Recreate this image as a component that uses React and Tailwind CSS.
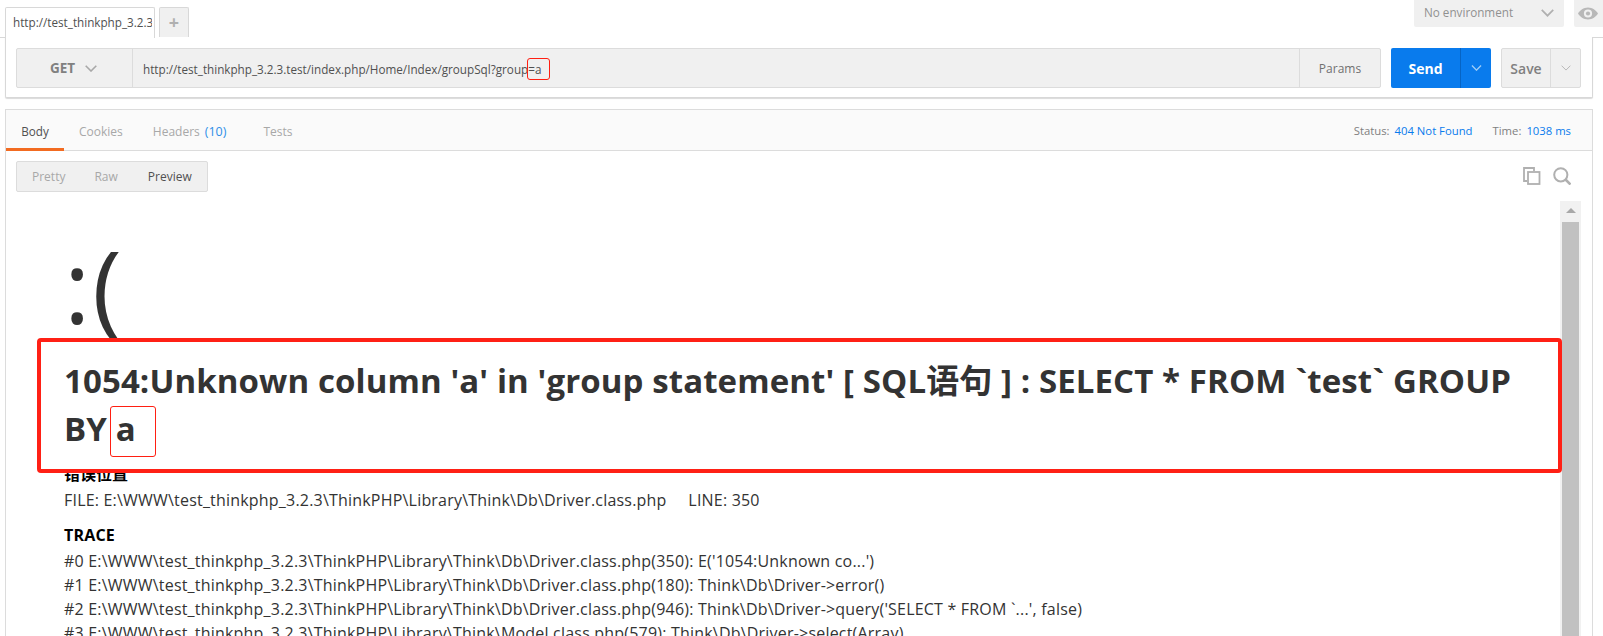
import React from "react";

const ui = "font-['Open_Sans','Noto_Sans',sans-serif]";
const doc = "font-['Open_Sans','Noto_Sans_CJK_SC',sans-serif]";

function Chevron({ className = "", color = "#a0a0a0", w = 12, h = 7, sw = 1.6 }) {
  return (
    <svg className={className} width={w} height={h} viewBox="0 0 12 7" fill="none">
      <path d="M0.7 0.7 L6 6 L11.3 0.7" stroke={color} strokeWidth={sw} />
    </svg>
  );
}

const traces = [
  "#0 E:\\WWW\\test_thinkphp_3.2.3\\ThinkPHP\\Library\\Think\\Db\\Driver.class.php(350): E('1054:Unknown co...')",
  "#1 E:\\WWW\\test_thinkphp_3.2.3\\ThinkPHP\\Library\\Think\\Db\\Driver.class.php(180): Think\\Db\\Driver->error()",
  "#2 E:\\WWW\\test_thinkphp_3.2.3\\ThinkPHP\\Library\\Think\\Db\\Driver.class.php(946): Think\\Db\\Driver->query('SELECT * FROM `...', false)",
  "#3 E:\\WWW\\test_thinkphp_3.2.3\\ThinkPHP\\Library\\Think\\Model.class.php(579): Think\\Db\\Driver->select(Array)",
];

export default function App() {
  return (
    <div className={`${ui} relative w-[1603px] h-[636px] overflow-hidden bg-white text-[#505050]`}>
      {/* tab strip */}
      <div className="flex h-[38px] items-start justify-between border-b border-[#d8d8d8]">
        <div className="flex items-start gap-[4px] pl-[5px] pt-[7px]">
          <div className="relative z-10 flex h-[31px] w-[150px] items-center rounded-t-[2px] border border-b-0 border-[#d8d8d8] bg-white pl-[7px] pr-[2px] text-[11.7px] text-[#505050]">
            <span className="overflow-hidden whitespace-nowrap">http://test_thinkphp_3.2.3.test</span>
          </div>
          <div className="flex h-[30px] w-[30px] items-center justify-center rounded-t-[2px] border border-b-0 border-[#d8d8d8] bg-[#f0f0f0] text-[18px] font-bold text-[#b0b0b0]">
            +
          </div>
        </div>
        <div className="flex items-start gap-[10px]">
          <div className="flex h-[27px] w-[150px] items-center justify-between rounded-b-[2px] bg-[#f0f0f0] pb-[1px] pl-[10px] pr-[10px] text-[11.7px] text-[#909090]">
            No environment
            <Chevron color="#b0b0b0" w={13} h={8} />
          </div>
          <div className="flex h-[27px] w-[29px] items-center justify-center rounded-bl-[2px] bg-[#f0f0f0] pr-[1px]">
            <svg width="20" height="13" viewBox="0 0 20 13">
              <path fillRule="evenodd" fill="#b8b8b8" d="M10 0.5C5.5 0.5 2 3.4 0 6.5c2 3.1 5.5 6 10 6s8-2.9 10-6c-2-3.1-5.5-6-10-6zM10 2.4a4.1 4.1 0 1 1 0 8.2a4.1 4.1 0 0 1 0-8.2z" />
              <circle cx="10" cy="6.5" r="2.1" fill="#b8b8b8" />
            </svg>
          </div>
        </div>
      </div>

      {/* request panel */}
      <div className="ml-[5px] flex h-[61px] w-[1588px] -mt-px items-center gap-[10px] rounded-b-[2px] border border-t-0 border-[#d8d8d8] bg-white pl-[10px] pr-[11px] pt-[1px] shadow-[0_1px_1px_rgba(0,0,0,0.15)]">
        <div className="flex h-[40px] w-[1365px] rounded-[2px] border border-[#dcdcdc] bg-[#f0f0f0]">
          <div className="flex w-[116px] items-center justify-center gap-[10px] border-r border-[#dcdcdc] pr-[2px] pt-[2px] text-[13.5px] font-bold text-[#808080]">
            GET
            <Chevron color="#a8a8a8" />
          </div>
          <div className="flex-1 pl-[10px] text-[11.7px] leading-[40px] text-[#505050]">
            http://test_thinkphp_3.2.3.test/index.php/Home/Index/groupSql?group=a
          </div>
          <div className="flex w-[81px] items-center justify-center border-l border-[#dcdcdc] pt-[2px] text-[12px] text-[#707070]">
            Params
          </div>
        </div>
        <div className="flex h-[40px] w-[100px] overflow-hidden rounded-[2px] bg-[#097bed] text-white">
          <div className="flex w-[69px] items-center justify-center pt-[2px] text-[14px] font-bold">Send</div>
          <div className="flex flex-1 items-center justify-center border-l border-[#0664c4]">
            <Chevron color="#9fcdf7" w={11} h={6} />
          </div>
        </div>
        <div className="flex h-[40px] w-[80px] rounded-[2px] border border-[#dcdcdc] bg-[#f0f0f0]">
          <div className="flex w-[49px] items-center justify-center border-r border-[#dcdcdc] pt-[2px] text-[14px] font-semibold text-[#808080]">Save</div>
          <div className="flex flex-1 items-center justify-center">
            <Chevron color="#b8b8b8" w={10} h={6} sw={1.2} />
          </div>
        </div>
      </div>

      {/* response panel */}
      <div className="ml-[5px] mt-[11px] w-[1588px] border border-b-0 border-[#dcdcdc] bg-white">
        <div className="flex h-[41px] items-center justify-between border-b border-[#dcdcdc] bg-[#fafafa] pr-[21px] text-[12px]">
          <div className="flex h-full">
            <div className="relative flex w-[58px] items-center justify-center pt-[4px] text-[11.7px] text-[#505050]">
              Body
              <div className="absolute bottom-[-1px] left-0 h-[3px] w-[58px] bg-[#f26b21]" />
            </div>
            <div className="ml-[15px] flex items-center pt-[4px] text-[#a8a8a8]">Cookies</div>
            <div className="ml-[30px] flex items-center pt-[4px] text-[#a8a8a8]">
              Headers<span className="ml-[5px] text-[12.5px] text-[#2f8fe8]">(10)</span>
            </div>
            <div className="ml-[37px] flex items-center pt-[4px] text-[#a8a8a8]">Tests</div>
          </div>
          <div className="flex items-center pt-[3px] text-[11.3px]">
            <span className="text-[#808080]">Status:</span>
            <span className="ml-[5px] text-[#097bed]">404 Not Found</span>
            <span className="ml-[20px] text-[#808080]">Time:</span>
            <span className="ml-[5px] text-[#097bed]">1038 ms</span>
          </div>
        </div>

        <div className="relative h-[486px] overflow-hidden">
          <div className="flex items-start justify-between pl-[10px] pr-[21px] pt-[10px]">
            <div className="flex h-[31px] w-[192px] items-center rounded-[2px] border border-[#dcdcdc] bg-[#f0f0f0] pt-[1px] text-[12px]">
              <span className="ml-[15px] text-[#a8a8a8]">Pretty</span>
              <span className="ml-[29px] text-[#a8a8a8]">Raw</span>
              <span className="ml-[30px] text-[#505050]">Preview</span>
            </div>
            <div className="flex items-center gap-[12px] pt-[6px]">
              <svg width="18" height="18" viewBox="0 0 18 18" fill="none" stroke="#b0b0b0" strokeWidth="1.8">
                <path d="M4 14H1V1h10v3" />
                <rect x="5" y="5" width="11.5" height="12" />
              </svg>
              <svg width="18" height="18" viewBox="0 0 18 18" fill="none" stroke="#b0b0b0" strokeWidth="2">
                <circle cx="7.8" cy="7.8" r="6.6" />
                <path d="M12.5 12.5L17.5 17.5" strokeWidth="2.6" />
              </svg>
            </div>
          </div>

          {/* preview content */}
          <div className={`${doc} ml-[58px] mt-[57px] w-[1480px] text-[#333]`}>
            <div className="h-[90px] overflow-hidden text-[100px] leading-[90px]">
              <div className="-mt-[39px] leading-[150px] tracking-[2px]">:(</div>
            </div>
            <h1 className="mt-[23px] text-[32px] font-bold leading-[48px]">&nbsp;</h1>
            <h1 className="text-[32px] font-bold leading-[48px]">&nbsp;</h1>
            <div className="mt-[4px] text-[16px] font-bold leading-[24px] text-black">错误位置</div>
            <div className="mt-[2px] text-[16px] leading-[24px] tracking-[0.2px] text-[#333] whitespace-pre">
              {"FILE: E:\\WWW\\test_thinkphp_3.2.3\\ThinkPHP\\Library\\Think\\Db\\Driver.class.php \u00a0\u00a0\u00a0\u00a0LINE: 350"}
            </div>
            <div className="mt-[11px] text-[16px] font-bold leading-[24px] tracking-[0.2px] text-black">TRACE</div>
            <div className="mt-[2px] text-[16px] leading-[24px] tracking-[0.2px] text-[#333] whitespace-nowrap">
              {traces.map((t) => (
                <div key={t}>{t}</div>
              ))}
            </div>
          </div>

          {/* scrollbar */}
          <div className="absolute left-[1554px] top-[50px] h-[436px] w-[21px] bg-[#f1f1f1]">
            <div className="mx-auto mt-[7px] h-0 w-0 border-x-[5px] border-b-[5px] border-x-transparent border-b-[#a8a8a8]" />
            <div className="absolute left-[2px] top-[21px] h-[415px] w-[17px] bg-[#c1c1c1]" />
          </div>
        </div>
      </div>

      {/* annotation: small box round the parameter */}
      <div className="absolute left-[527px] top-[58px] h-[22px] w-[23px] rounded-[3px] border border-[#ff1f12]" />

      {/* annotation: pasted error heading */}
      <div className={`${doc} absolute left-[37px] top-[338px] h-[135px] w-[1525px] rounded-[4px] border-[4px] border-[#ff2015] bg-white pl-[23px] pr-[20px] pt-[15px] text-[33px] font-bold leading-[48px] text-[#333]`}>
        <div className="tracking-[0.1px] whitespace-pre">{"1054:Unknown column 'a' in 'group statement' [ SQL语句 ] : SELECT * FROM `test` GROUP"}</div>
        <div className="tracking-[0.1px] whitespace-pre">{"BY a"}</div>
      </div>
      <div className="absolute left-[110px] top-[406px] h-[51px] w-[46px] rounded-[3px] border border-[#ff1f12]" />
    </div>
  );
}
